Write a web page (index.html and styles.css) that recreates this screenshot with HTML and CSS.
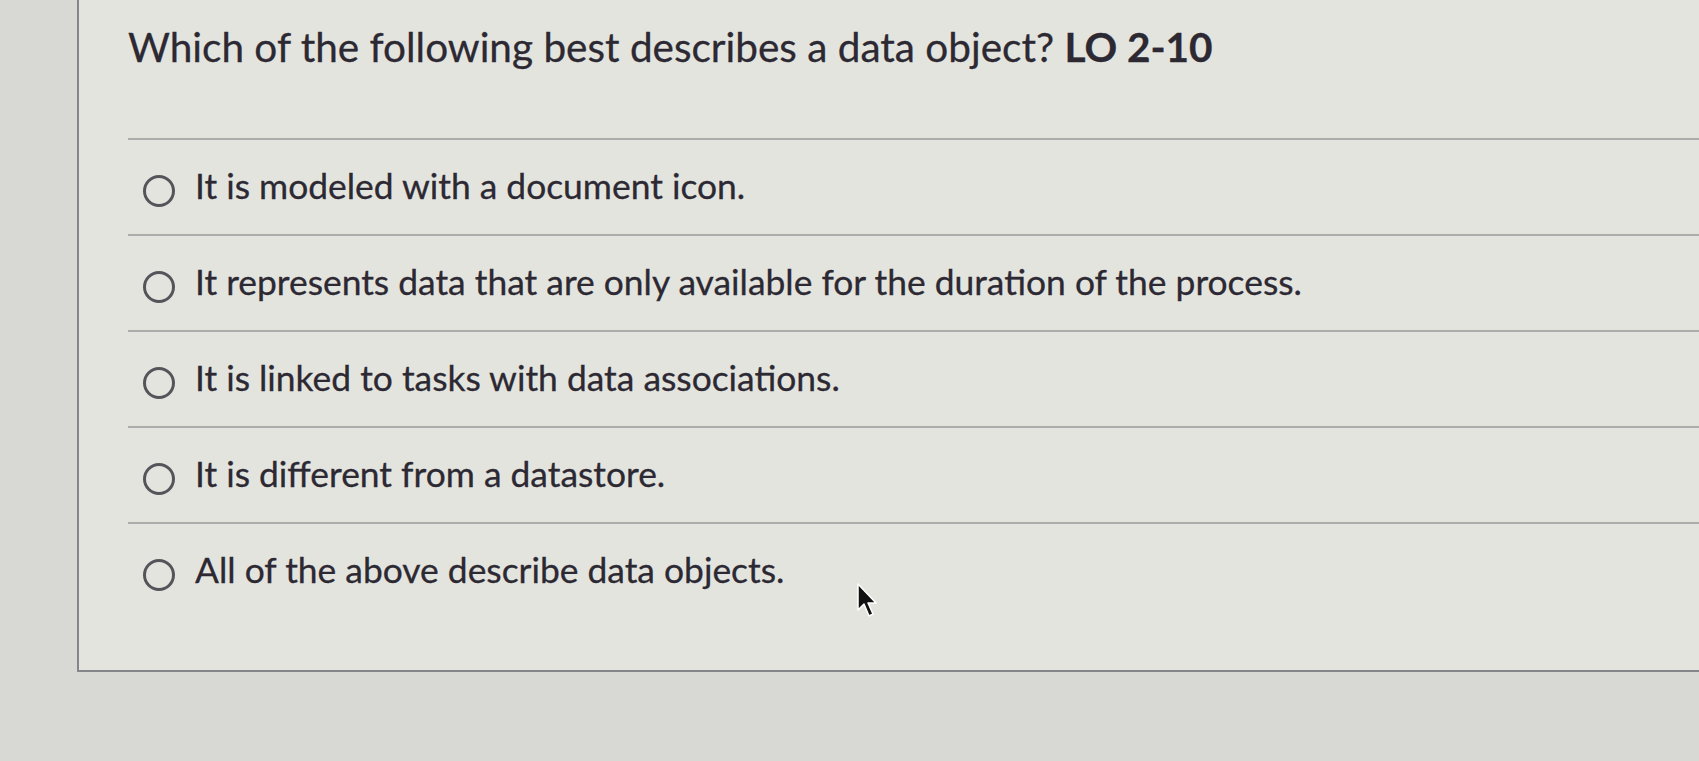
FILE: index.html
```html
<!DOCTYPE html>
<html lang="en">
<head>
<meta charset="utf-8">
<title>Quiz question</title>
<link rel="stylesheet" href="styles.css">
</head>
<body>
<div class="card">
  <h1 class="question">Which of the following best describes a data object? <strong>LO 2-10</strong></h1>
  <ul class="options">
    <li class="option"><span class="radio"></span><span class="label">It is modeled with a document icon.</span></li>
    <li class="option"><span class="radio"></span><span class="label">It represents data that are only available for the duration of the process.</span></li>
    <li class="option"><span class="radio"></span><span class="label">It is linked to tasks with data associations.</span></li>
    <li class="option"><span class="radio"></span><span class="label">It is different from a datastore.</span></li>
    <li class="option"><span class="radio"></span><span class="label">All of the above describe data objects.</span></li>
  </ul>
</div>
<svg class="cursor" width="24" height="38" viewBox="0 0 24 38">
  <path d="M2 2 L2 28 L8 22 L13 34 L17 32 L12 21 L20 21 Z" fill="#111" stroke="#fff" stroke-width="1.5" stroke-linejoin="round"/>
</svg>
</body>
</html>
```
FILE: styles.css
```css
html, body {
  margin: 0;
  padding: 0;
}
body {
  width: 1699px;
  height: 761px;
  overflow: hidden;
  background: #d8d9d4;
  font-family: Lato, "Open Sans", sans-serif;
  color: #2c2933;
  position: relative;
}
.card {
  margin-left: 77px;
  height: 672px;
  box-sizing: border-box;
  border-left: 2px solid #85868a;
  border-bottom: 2px solid #85868a;
  background: #e4e4df;
  padding: 23px 0 0 49px;
}
.question {
  margin: 0;
  font-size: 40.5px;
  line-height: 48px;
  font-weight: 400;
  -webkit-text-stroke: 0.3px currentColor;
}
.question strong {
  font-weight: 700;
}
.options {
  list-style: none;
  margin: 67px 0 0 0;
  padding: 0;
}
.option {
  height: 96px;
  box-sizing: border-box;
  border-top: 2px solid #acadaa;
  display: flex;
  align-items: center;
  padding: 8px 0 0 15px;
}
.radio {
  width: 32px;
  height: 32px;
  box-sizing: border-box;
  border: 3px solid #55545a;
  border-radius: 50%;
  flex: none;
  margin-right: 20px;
}
.label {
  font-size: 35.4px;
  line-height: 40px;
  margin-bottom: 10px;
  -webkit-text-stroke: 0.3px currentColor;
}
.cursor {
  position: absolute;
  left: 856px;
  top: 582px;
}
```
